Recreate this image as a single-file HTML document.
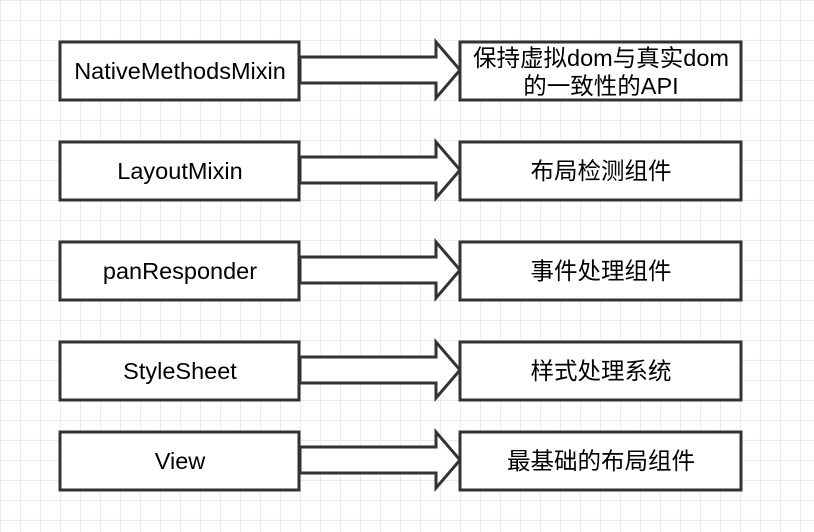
<html><head><style>body{margin:0}svg text{font-family:"Liberation Sans","Noto Sans CJK SC",sans-serif;font-size:23.5px;fill:#000}</style></head><body>
<svg width="814" height="532" xmlns="http://www.w3.org/2000/svg">
<defs><pattern id="g" width="20" height="20" patternUnits="userSpaceOnUse" x="0" y="0"><path d="M0 0.5H20M0.5 0V20" stroke="#e8e8ff" stroke-width="1" fill="none"/></pattern>
<g id="a"><path d="M300 -13H436V-28L460 0L436 28V13H300Z" fill="#fff" stroke="#333" stroke-width="3" stroke-linejoin="miter"/></g></defs>
<rect width="814" height="532" fill="#fff"/><rect width="814" height="532" fill="url(#g)"/>
<g fill="#fff" stroke="#333" stroke-width="3">
<use href="#a" y="70"/><use href="#a" y="170"/><use href="#a" y="270"/><use href="#a" y="370"/><use href="#a" y="460"/>
<rect x="60" y="42" width="239" height="58"/><rect x="460" y="42" width="281" height="58"/>
<rect x="60" y="142" width="239" height="58"/><rect x="460" y="142" width="281" height="58"/>
<rect x="60" y="242" width="239" height="58"/><rect x="460" y="242" width="281" height="58"/>
<rect x="60" y="342" width="239" height="58"/><rect x="460" y="342" width="281" height="58"/>
<rect x="60" y="432" width="239" height="58"/><rect x="460" y="432" width="281" height="58"/>
</g>
<g text-anchor="middle">
<text x="180" y="79">NativeMethodsMixin</text>
<text x="601" y="66">保持虚拟dom与真实dom</text>
<text x="601" y="94">的一致性的API</text>
<text x="180" y="179">LayoutMixin</text><text x="601" y="179">布局检测组件</text>
<text x="180" y="279">panResponder</text><text x="601" y="279">事件处理组件</text>
<text x="180" y="379">StyleSheet</text><text x="601" y="379">样式处理系统</text>
<text x="180" y="469">View</text><text x="601" y="469">最基础的布局组件</text>
</g></svg></body></html>
